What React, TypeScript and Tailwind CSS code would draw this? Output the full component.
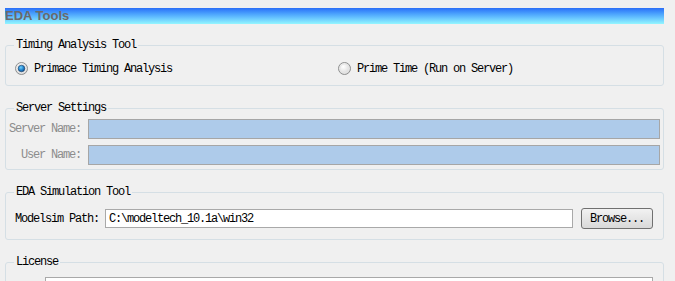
import React from "react";

const mono =
  "font-[family-name:'Liberation_Mono','Courier_New',monospace] text-[12px] tracking-[-1.2px] leading-[12px] whitespace-nowrap";

function Radio({ checked }: { checked: boolean }) {
  return (
    <svg width="13" height="13" viewBox="0 0 13 13" className="shrink-0">
      <defs>
        <radialGradient id="rfill" cx="40%" cy="35%" r="70%">
          <stop offset="0%" stopColor="#ffffff" />
          <stop offset="100%" stopColor="#d4d4d4" />
        </radialGradient>
        <radialGradient id="rdot" cx="40%" cy="35%" r="70%">
          <stop offset="0%" stopColor="#6fd0ff" />
          <stop offset="60%" stopColor="#1f7fc8" />
          <stop offset="100%" stopColor="#0b4a8a" />
        </radialGradient>
      </defs>
      <circle cx="6.5" cy="6.5" r="6" fill="url(#rfill)" stroke="#8e8f8f" strokeWidth="1" />
      <circle cx="6.5" cy="6.5" r="4.5" fill="none" stroke="#e6e6e6" strokeWidth="1" />
      {checked && <circle cx="6.5" cy="6.5" r="3.3" fill="url(#rdot)" stroke="#1b3e66" strokeWidth="0.6" />}
    </svg>
  );
}

function Group({ title, className, children }: { title: string; className: string; children?: React.ReactNode }) {
  return (
    <fieldset className={`rounded-[3px] border border-[#d5dfe5] px-0 ${className}`}>
      <legend className={`ml-[8px] px-[2px] text-black ${mono}`}>{title}</legend>
      {children}
    </fieldset>
  );
}

export default function App() {
  return (
    <div className="h-[281px] w-[675px] overflow-hidden bg-[#f0f0f0] pl-[5px] pr-[11px] pt-[8px]">
      <div className="flex h-[16px] items-center bg-gradient-to-b from-[#2c6ef7] to-[#94f6ff]">
        <span className="font-[family-name:'Liberation_Sans',Arial,sans-serif] text-[13px] font-bold leading-[16px] text-[#6a6a6a]">
          EDA Tools
        </span>
      </div>

      <Group title="Timing Analysis Tool" className="mt-[15px] pb-[10px] pt-[11px]">
        <div className={`flex items-center pl-[9px] ${mono}`}>
          <label className="flex w-[323px] items-center gap-[6px]">
            <Radio checked />
            <span>Primace Timing Analysis</span>
          </label>
          <label className="flex items-center gap-[6px]">
            <Radio checked={false} />
            <span>Prime Time (Run on Server)</span>
          </label>
        </div>
      </Group>

      <Group title="Server Settings" className="mt-[16px] pb-[4px] pt-[5px]">
        <div className={`grid grid-cols-[75px_1fr] items-center gap-x-[7px] gap-y-[6px] pr-[3px] text-[#8d8d8d] ${mono}`}>
          <span className="text-right">Server Name:</span>
          <div className="h-[20px] border border-[#a6a6a6] bg-[#aecbea]" />
          <span className="text-right">User Name:</span>
          <div className="h-[20px] border border-[#a6a6a6] bg-[#aecbea]" />
        </div>
      </Group>

      <Group title="EDA Simulation Tool" className="mt-[16px] pb-[10px] pt-[10px]">
        <div className={`flex items-center pl-[9px] pr-[10px] ${mono}`}>
          <span className="w-[84px] shrink-0">Modelsim Path:</span>
          <div className="ml-[6px] flex h-[19px] w-[468px] items-center border border-[#a9a9a9] bg-white pl-[3px]">
            C:\modeltech_10.1a\win32
          </div>
          <button className="ml-auto h-[21px] w-[72px] rounded-[3px] border border-[#707070] bg-gradient-to-b from-[#f2f2f2] to-[#d9d9d9] text-black">
            Browse...
          </button>
        </div>
      </Group>

      <Group title="License" className="mt-[16px] pt-[9px] pb-[10px]">
        <div className="ml-[39px] mr-[10px] h-[40px] border border-[#a9a9a9] bg-white" />
      </Group>
    </div>
  );
}
